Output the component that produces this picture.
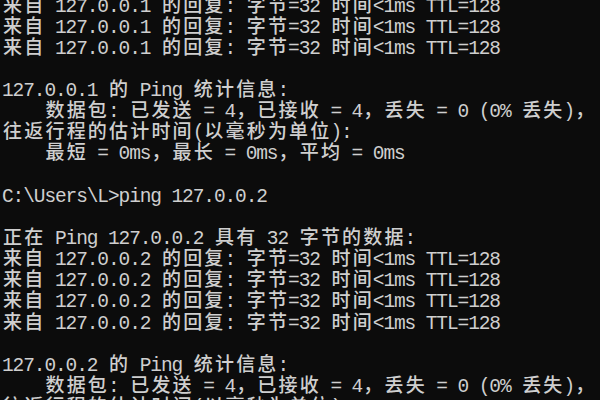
import React from "react";

const reply1 = "来自 127.0.0.1 的回复: 字节=32 时间<1ms TTL=128";
const reply2 = "来自 127.0.0.2 的回复: 字节=32 时间<1ms TTL=128";
const stats = "    数据包: 已发送 = 4，已接收 = 4，丢失 = 0 (0% 丢失)，";
const rtt = "往返行程的估计时间(以毫秒为单位):";

const lines: string[] = [
  reply1,
  reply1,
  reply1,
  "",
  "127.0.0.1 的 Ping 统计信息:",
  stats,
  rtt,
  "    最短 = 0ms，最长 = 0ms，平均 = 0ms",
  "",
  "C:\\Users\\L>ping 127.0.0.2",
  "",
  "正在 Ping 127.0.0.2 具有 32 字节的数据:",
  reply2,
  reply2,
  reply2,
  reply2,
  "",
  "127.0.0.2 的 Ping 统计信息:",
  stats,
  rtt,
];

function isWide(ch: string): boolean {
  const c = ch.codePointAt(0) ?? 0;
  return c >= 0x2e80;
}

function Line({ text }: { text: string }) {
  const chars = Array.from(text);
  return (
    <div className="h-[21.15px] leading-[21.15px] whitespace-pre text-[19px] [font-family:'Noto_Sans_CJK_SC',sans-serif]">
      {chars.map((ch, i) =>
        isWide(ch) ? (
          <span
            key={i}
            className="inline-block w-[21.2px] leading-none text-center text-[19px] font-medium [font-family:'Noto_Sans_CJK_SC',sans-serif]"
          >
            {ch}
          </span>
        ) : (
          <span
            key={i}
            className="inline-block w-[10.6px] leading-none text-center text-[19.5px] [font-family:'Liberation_Mono',monospace]"
          >
            {ch === " " ? "\u00a0" : ch}
          </span>
        )
      )}
    </div>
  );
}

export default function App() {
  return (
    <div className="w-[600px] h-[400px] overflow-hidden bg-[#0c0c0c] text-[#cfcfcf]">
      <div className="-mt-[7.5px] pl-[2px]">
        {lines.map((l, i) => (
          <Line key={i} text={l} />
        ))}
      </div>
    </div>
  );
}
